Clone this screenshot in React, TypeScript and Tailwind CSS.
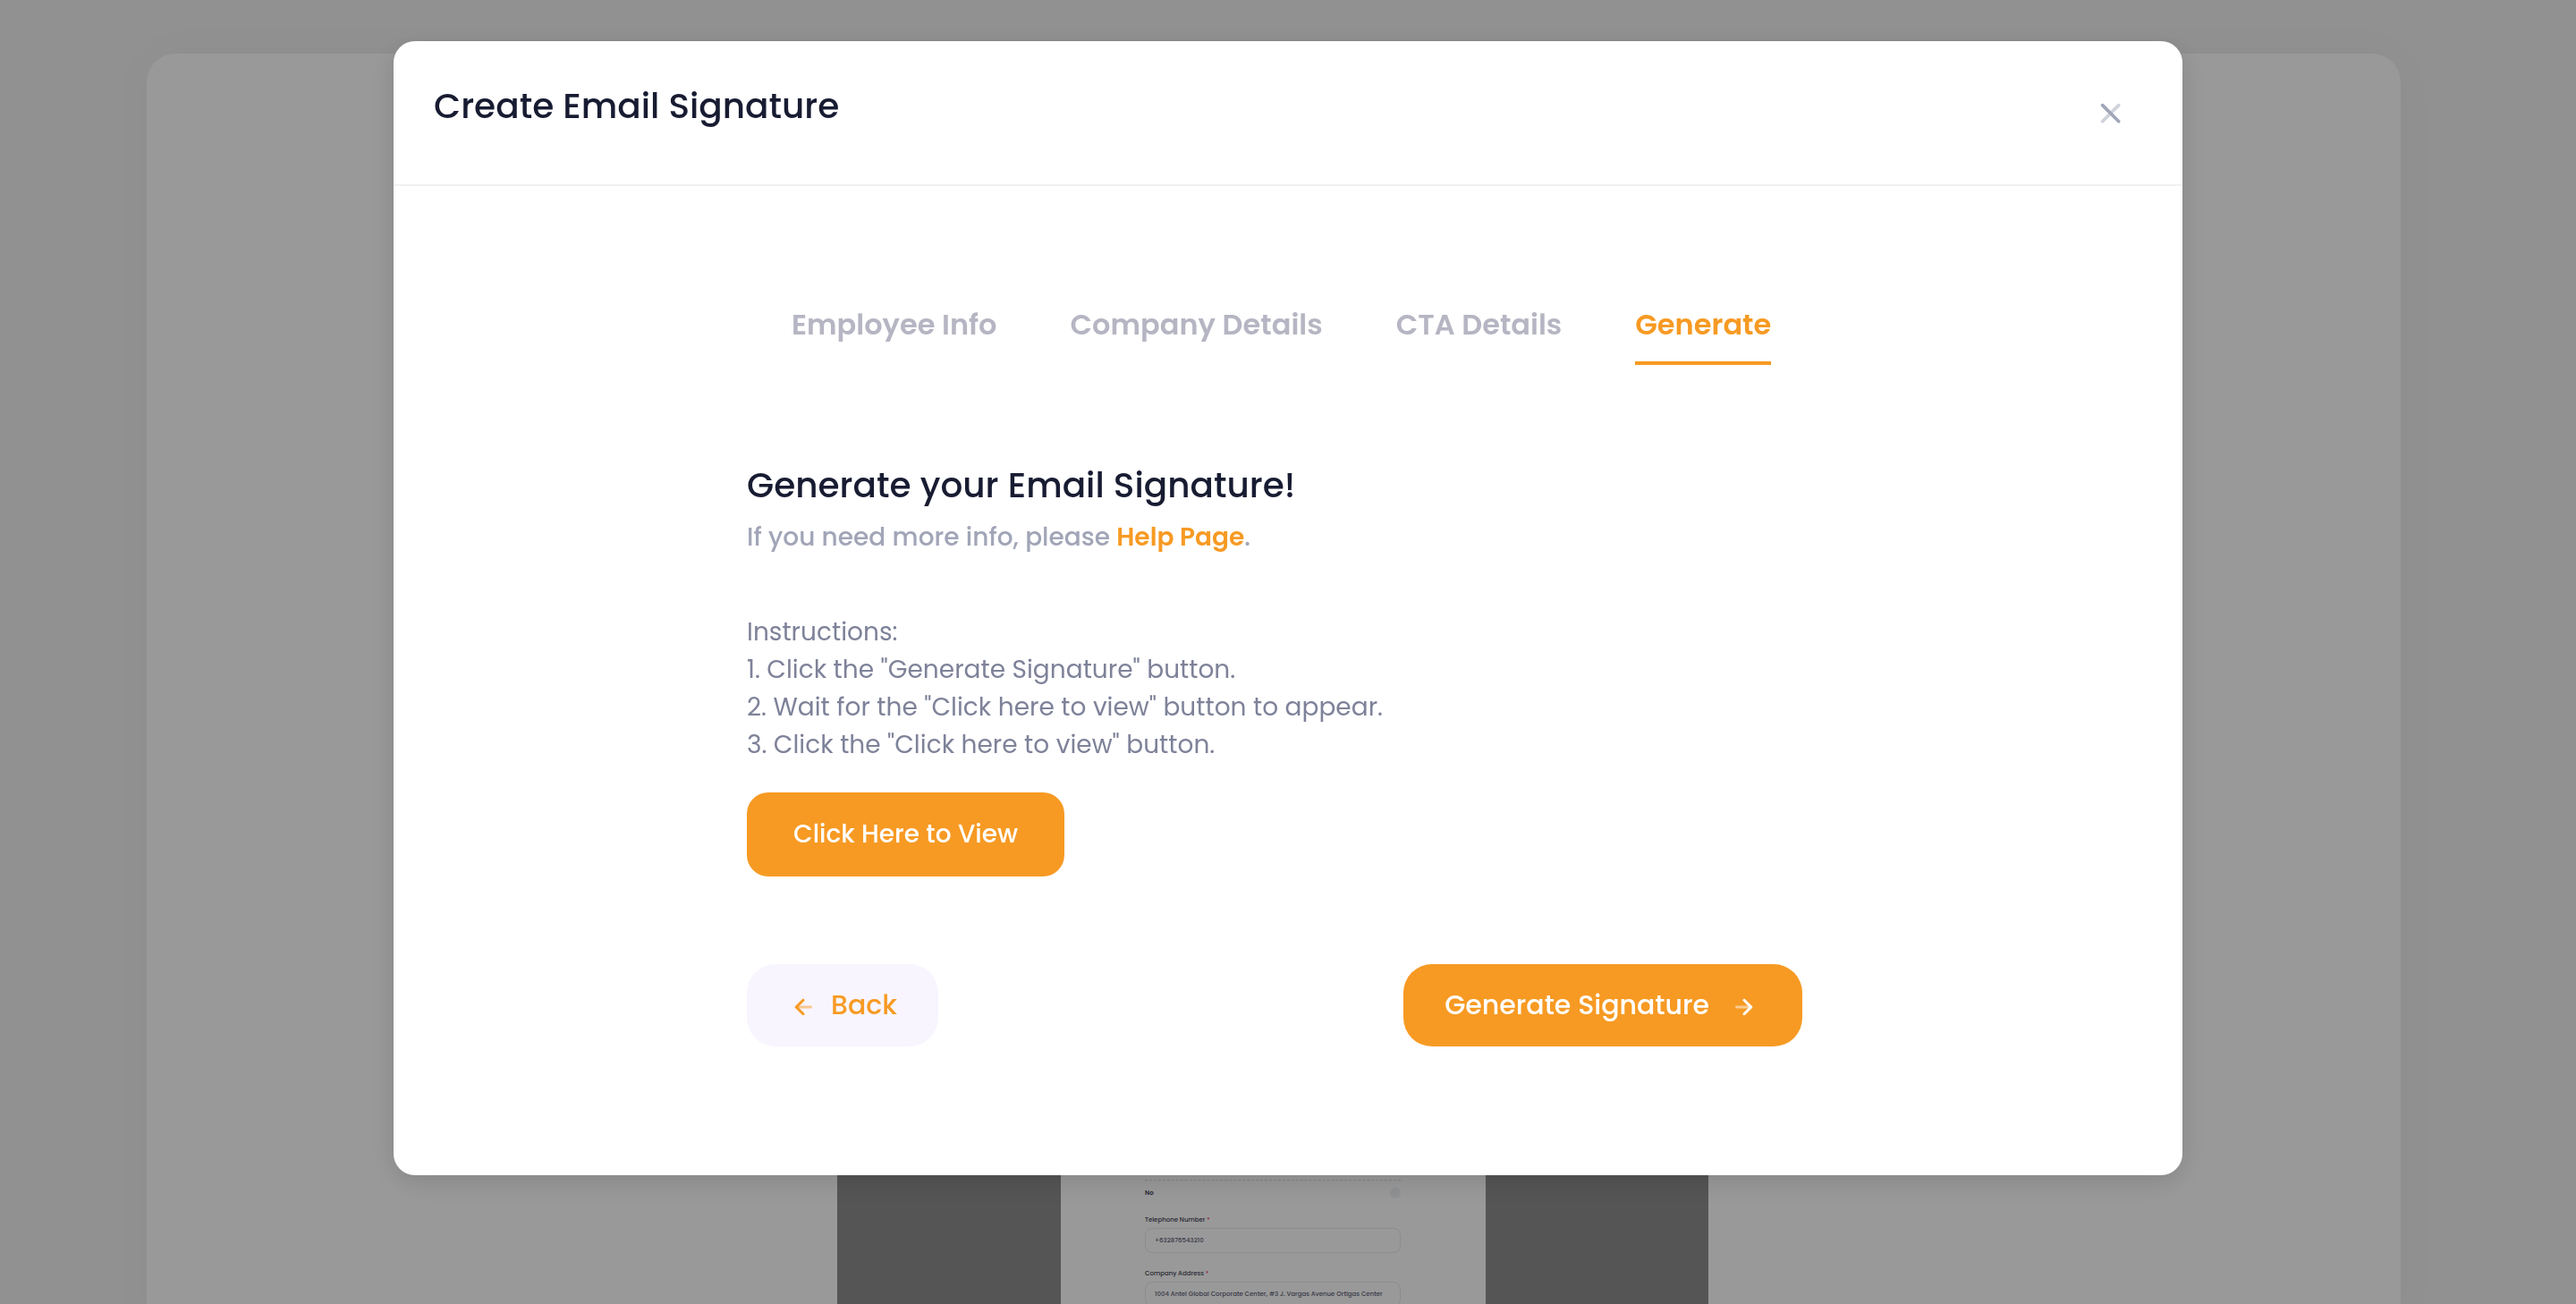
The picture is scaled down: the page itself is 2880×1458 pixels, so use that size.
import React from 'react';

const tabs = ['Employee Info', 'Company Details', 'CTA Details', 'Generate'];

const fields = [
  { id: 'telephone', label: 'Telephone Number', value: '+632876543210' },
  {
    id: 'address',
    label: 'Company Address',
    value: '1004 Antel Global Corporate Center, #3 J. Vargas Avenue Ortigas Center',
  },
];

function CloseIcon() {
  return (
    <svg viewBox="0 0 24 24" className="size-11" fill="currentColor" aria-hidden="true">
      <rect opacity="0.5" x="6" y="17.3137" width="16" height="2" rx="1" transform="rotate(-45 6 17.3137)" />
      <rect x="7.41422" y="6" width="16" height="2" rx="1" transform="rotate(45 7.41422 6)" />
    </svg>
  );
}

function ArrowLeftIcon() {
  return (
    <svg viewBox="0 0 24 24" className="mr-3.5 inline size-[34px]" fill="currentColor" aria-hidden="true">
      <rect opacity="0.5" x="6" y="11" width="13" height="2" rx="1" />
      <path d="M8.56569 11.4343L12.75 7.25C13.1642 6.83579 13.1642 6.16421 12.75 5.75C12.3358 5.33579 11.6642 5.33579 11.25 5.75L5.70711 11.2929C5.31658 11.6834 5.31658 12.3166 5.70711 12.7071L11.25 18.25C11.6642 18.6642 12.3358 18.6642 12.75 18.25C13.1642 17.8358 13.1642 17.1642 12.75 16.75L8.56569 12.5657C8.25327 12.2533 8.25327 11.7467 8.56569 11.4343Z" />
    </svg>
  );
}

function ArrowRightIcon() {
  return (
    <svg viewBox="0 0 24 24" className="mr-0.5 ml-5.5 inline size-[34px]" fill="currentColor" aria-hidden="true">
      <rect opacity="0.5" x="18" y="13" width="13" height="2" rx="1" transform="rotate(-180 18 13)" />
      <path d="M15.4343 12.5657L11.25 16.75C10.8358 17.1642 10.8358 17.8358 11.25 18.25C11.6642 18.6642 12.3358 18.6642 12.75 18.25L18.2929 12.7071C18.6834 12.3166 18.6834 11.6834 18.2929 11.2929L12.75 5.75C12.3358 5.33579 11.6642 5.33579 11.25 5.75C10.8358 6.16421 10.8358 6.83579 11.25 7.25L15.4343 11.4343C15.7467 11.7467 15.7467 12.2533 15.4343 12.5657Z" />
    </svg>
  );
}

function BackgroundPage() {
  return (
    <div className="flex min-h-screen flex-col pt-[60px] pr-[196px] pl-[164px]">
      <div className="flex flex-1 justify-center rounded-t-[32px] bg-white pr-0.5 shadow-[0_0_50px_rgba(0,0,0,0.03)]">
        <div className="flex w-full max-w-[974px] justify-center bg-[#8e8e8e]">
          <div className="flex w-full max-w-[475px] justify-center bg-white">
            <form className="w-full max-w-[286px] pt-[1259px] text-[7px] leading-[10px] text-[#3f4254]">
              <div className="mb-[19px] flex items-center justify-between border-t border-dashed border-[#d8dae4] pt-2 font-semibold">
                <label htmlFor="include">No</label>
                <input
                  id="include"
                  type="checkbox"
                  className="size-3 appearance-none rounded-full bg-[#eff2f5]"
                />
              </div>
              {fields.map((field) => (
                <div key={field.id} className="mb-[18px]">
                  <label htmlFor={field.id} className="block pb-1 font-medium">
                    {field.label} <span className="text-[#f1416c]">*</span>
                  </label>
                  <input
                    id={field.id}
                    defaultValue={field.value}
                    className="block h-7 w-full rounded-lg border border-[#e9ebf0] px-[10px] font-medium text-[#5e6278]"
                  />
                </div>
              ))}
            </form>
          </div>
        </div>
      </div>
    </div>
  );
}

export default function App() {
  return (
    <div className="h-screen overflow-hidden bg-[#f2f2f3] font-[Poppins,Inter,sans-serif]">
      <BackgroundPage />
      <div className="fixed inset-0 overflow-y-auto bg-black/40 px-6 py-[46px]">
        <div
          role="dialog"
          aria-modal="true"
          aria-labelledby="dialog-title"
          className="mx-auto w-full max-w-[2000px] rounded-3xl bg-white shadow-[0_7px_30px_rgba(0,0,0,0.13)]"
        >
          <header className="flex items-center justify-between border-b-2 border-[#f1f1f2] px-[45px] py-11">
            <h1 id="dialog-title" className="mb-3.5 text-[39px] leading-[48px] font-medium text-[#181c32]">
              Create Email Signature
            </h1>
            <button
              type="button"
              aria-label="Close"
              className="flex size-[72px] items-center justify-center text-[#a1a5b7]"
            >
              <CloseIcon />
            </button>
          </header>

          <div className="pt-[131px] pr-[30px] pb-36">
            <div className="mx-auto w-full max-w-[1180px]">
              <nav className="flex gap-[82px] pl-[50px] text-[32px] leading-[48px] font-semibold">
                {tabs.map((tab) => (
                  <a
                    key={tab}
                    href="#"
                    aria-current={tab === 'Generate' ? 'step' : undefined}
                    className={
                      tab === 'Generate'
                        ? 'border-b-4 border-[#f79a23] pb-[17px] text-[#f79a23]'
                        : 'border-b-4 border-transparent pb-[17px] text-[#b5b5c3]'
                    }
                  >
                    {tab}
                  </a>
                ))}
              </nav>

              <h2 className="mt-[106px] text-[39px] leading-[58px] font-medium text-[#181c32]">
                Generate your Email Signature!
              </h2>
              <p className="mt-2 text-[28px] leading-[42px] font-medium text-[#a1a5b7]">
                If you need more info, please{' '}
                <a href="#" className="font-semibold text-[#f79a23]">
                  Help Page
                </a>
                .
              </p>

              <div className="mt-16 text-[28px] leading-[42px] text-[#7e8299]">
                <p>Instructions:</p>
                <p>1. Click the "Generate Signature" button.</p>
                <p>2. Wait for the "Click here to view" button to appear.</p>
                <p>3. Click the "Click here to view" button.</p>
              </div>

              <button
                type="button"
                className="mt-8 block rounded-3xl bg-[#f79a23] px-[52px] py-[26px] text-[28px] leading-[42px] font-medium text-white"
              >
                Click Here to View
              </button>

              <div className="mt-[98px] flex items-center justify-between text-[30px] leading-[44px] font-medium">
                <button type="button" className="rounded-[32px] bg-[#f8f5ff] px-[46px] py-6 text-[#f79a23]">
                  <ArrowLeftIcon />
                  Back
                </button>
                <button type="button" className="rounded-[32px] bg-[#f79a23] px-[46px] py-6 text-white">
                  Generate Signature
                  <ArrowRightIcon />
                </button>
              </div>
            </div>
          </div>
        </div>
      </div>
    </div>
  );
}
